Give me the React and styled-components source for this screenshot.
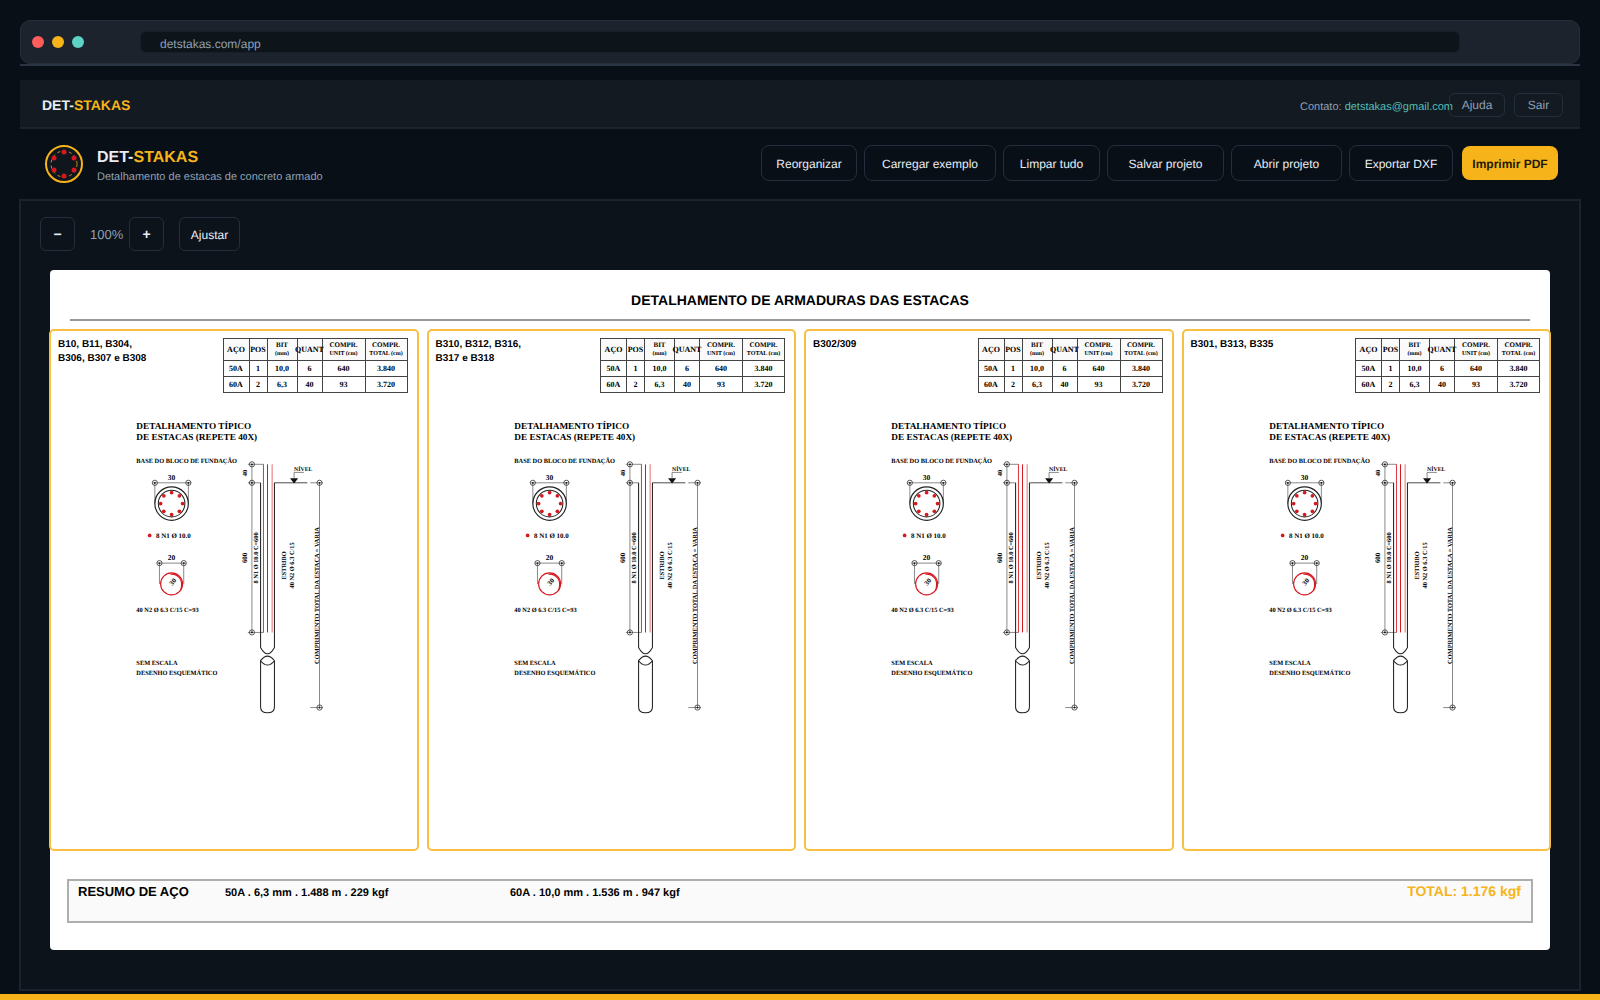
import React, { useState } from 'react'
import styled, { createGlobalStyle, ThemeProvider } from 'styled-components'

const theme = {
  sans: '"Liberation Sans", Arial, sans-serif',
  serif: '"Liberation Serif", "Times New Roman", serif',
  colors: {
    page: '#080f16',
    chrome: '#1c232d',
    field: '#0d151b',
    bar: '#131a22',
    panel: '#0c131a',
    line: '#1a232e',
    outline: '#242e3c',
    text: '#e8edf5',
    muted: '#8fa0b5',
    teal: '#55bfb3',
    yellow: '#f6b41a',
    yellowSoft: '#f8bf42',
    red: '#d6181f'
  }
}

const actions = [
  { text: 'Reorganizar', width: 96 },
  { text: 'Carregar exemplo', width: 132 },
  { text: 'Limpar tudo', width: 97 },
  { text: 'Salvar projeto', width: 117 },
  { text: 'Abrir projeto', width: 111 },
  { text: 'Exportar DXF', width: 104 }
]

const groups = [
  ['B10, B11, B304,', 'B306, B307 e B308'],
  ['B310, B312, B316,', 'B317 e B318'],
  ['B302/309'],
  ['B301, B313, B335']
]

const steel = [
  ['50A', '1', '10,0', '6', '640', '3.840'],
  ['60A', '2', '6,3', '40', '93', '3.720']
]

const bars = [0, 1, 2, 3, 4, 5, 6, 7].map(i => ({
  x: 72 + 19 * Math.cos((i * Math.PI) / 4),
  y: 162 + 19 * Math.sin((i * Math.PI) / 4)
}))

const nodes = [
  [43, 126],
  [101, 126],
  [51, 265],
  [93, 265],
  [211, 94],
  [211, 126],
  [211, 385],
  [328, 126],
  [328, 515]
]

function Logo() {
  return (
    <svg width="40" height="40" viewBox="0 0 40 40" aria-hidden="true">
      <circle cx="20" cy="20" r="18" fill="#10161d" stroke="#f6b41a" strokeWidth="2" />
      <circle
        cx="20"
        cy="20"
        r="13"
        fill="none"
        stroke="#f6b41a"
        strokeOpacity="0.8"
        strokeDasharray="3 3"
      />
      {[[20, 8], [30, 14], [30, 26], [20, 32], [10, 26], [10, 14]].map(([x, y]) => (
        <circle key={`${x}-${y}`} cx={x} cy={y} r="2.5" fill="#d6181f" />
      ))}
    </svg>
  )
}

function PileDrawing() {
  return (
    <Drawing viewBox="0 0 360 540">
      <DrawText x="11" y="33" $size={16}>DETALHAMENTO TÍPICO</DrawText>
      <DrawText x="11" y="52" $size={16}>DE ESTACAS (REPETE 40X)</DrawText>
      <DrawText x="11" y="92">BASE DO BLOCO DE FUNDAÇÃO</DrawText>

      {/* dimension lines */}
      <g stroke="#333" strokeWidth="1" fill="none">
        <path d="M39 126H106M43 126V162M101 126V162" />
        <path d="M47 265H97M51 265V301M93 265V301" />
        <path d="M211 94V385M204 94H231M204 126H226M204 385H231" />
        <path d="M328 126V515M312 126H334M312 515H334" />
        <path d="M284 118V108H301" />
        {nodes.map(([x, y]) => (
          <circle key={`${x}-${y}`} cx={x} cy={y} r="4.5" strokeWidth="1.4" />
        ))}
      </g>
      {nodes.map(([x, y]) => (
        <circle key={`${x}-${y}`} cx={x} cy={y} r="1.6" fill="#111" />
      ))}

      {/* pile section */}
      <DrawText x="72" y="121" $size={13} textAnchor="middle">30</DrawText>
      <circle cx="72" cy="162" r="29" fill="none" stroke="#222" strokeWidth="2" />
      <circle cx="72" cy="162" r="23" fill="none" stroke="#222" strokeWidth="1.8" />
      {bars.map((bar, i) => (
        <circle key={i} cx={bar.x} cy={bar.y} r="3.2" fill="#d6181f" />
      ))}
      <circle cx="34" cy="217" r="3.2" fill="#d6181f" />
      <DrawText x="45" y="221" $size={12}>8 N1 Ø 10.0</DrawText>

      {/* stirrup */}
      <DrawText x="72" y="259" $size={13} textAnchor="middle">20</DrawText>
      <g fill="none" stroke="#d6181f" strokeWidth="2">
        <circle cx="72" cy="301" r="19" />
        <path d="M70 284C84 283 93 295 88 311" />
      </g>
      <DrawText transform="translate(77 300) rotate(-50)" $size={12} textAnchor="middle">30</DrawText>
      <DrawText x="11" y="350">40 N2 Ø 6.3 C/15 C=93</DrawText>
      <DrawText x="11" y="441">SEM ESCALA</DrawText>
      <DrawText x="11" y="458">DESENHO ESQUEMÁTICO</DrawText>

      {/* pile elevation */}
      <g fill="none" stroke="#222" strokeWidth="1.8">
        <path d="M226 126V411Q238 433 250 411V126" />
        <path d="M250 126H307" strokeWidth="1.4" />
        <path d="M226 434Q238 418 250 434Q238 449 226 434V514Q226 524 238 524Q250 524 250 514V434" />
      </g>
      <path d="M277 118H291L284 127Z" fill="#111" />
      <g stroke="#d6181f" strokeWidth="1.8">
        <path d="M231 94V385" strokeOpacity="0.85" />
        <path d="M238 94V385" />
        <path d="M246 94V385" strokeOpacity="0.6" />
      </g>
      <DrawText x="284" y="105" $size={10}>NÍVEL</DrawText>
      <DrawText transform="translate(202 109) rotate(-90)" textAnchor="middle">40</DrawText>
      <DrawText transform="translate(203 256) rotate(-90)" $size={12} textAnchor="middle">600</DrawText>
      <DrawText transform="translate(222 256) rotate(-90)" textAnchor="middle">8 N1 Ø 10.0 C=600</DrawText>
      <DrawText transform="translate(270 269) rotate(-90)" textAnchor="middle">ESTRIBO</DrawText>
      <DrawText transform="translate(284 269) rotate(-90)" textAnchor="middle">40 N2 Ø 6.3 C/15</DrawText>
      <DrawText transform="translate(327 321) rotate(-90)" textAnchor="middle">
        COMPRIMENTO TOTAL DA ESTACA = VARIA
      </DrawText>
    </Drawing>
  )
}

function SteelTable() {
  return (
    <Table>
      <colgroup>
        <Col $width={26} />
        <Col $width={18} />
        <Col $width={30} />
        <Col $width={25} />
        <Col $width={43} />
        <Col $width={42} />
      </colgroup>
      <thead>
        <tr>
          <Th>AÇO</Th>
          <Th>POS</Th>
          <Th $small>BIT<Unit>(mm)</Unit></Th>
          <Th><Wide>QUANT</Wide></Th>
          <Th $small>COMPR.<Unit>UNIT (cm)</Unit></Th>
          <Th $small>COMPR.<Unit>TOTAL (cm)</Unit></Th>
        </tr>
      </thead>
      <tbody>
        {steel.map(row => (
          <tr key={row[0]}>
            {row.map((value, i) => (
              <Td key={i}>{value}</Td>
            ))}
          </tr>
        ))}
      </tbody>
    </Table>
  )
}

function App() {
  const [zoom, setZoom] = useState(100)
  return (
    <ThemeProvider theme={theme}>
      <GlobalStyle />
      <Page>
        <Browser>
          <Dots>
            <Dot $color="#ff5c5c" />
            <Dot $color="#f6b41a" />
            <Dot $color="#5dd3c8" />
          </Dots>
          <Address type="text" aria-label="Endereço" defaultValue="detstakas.com/app" />
        </Browser>
        <TopBar>
          <Brand>DET-<span>STAKAS</span></Brand>
          <TopNav>
            <Contact>
              Contato: <a href="mailto:detstakas@gmail.com">detstakas@gmail.com</a>
            </Contact>
            <SmallButton $width={56}>Ajuda</SmallButton>
            <SmallButton $width={49}>Sair</SmallButton>
          </TopNav>
        </TopBar>
        <Header>
          <Logo />
          <Heading>
            <Title>DET-<span>STAKAS</span></Title>
            <Subtitle>Detalhamento de estacas de concreto armado</Subtitle>
          </Heading>
          <Actions>
            {actions.map(({ text, width }) => (
              <ActionButton key={text} $width={width}>{text}</ActionButton>
            ))}
            <PrintButton $width={96}>Imprimir PDF</PrintButton>
          </Actions>
        </Header>
        <Panel>
          <Tools>
            <ToolButton $width={35} $bold aria-label="Diminuir" onClick={() => setZoom(zoom - 10)}>−</ToolButton>
            <Zoom>{zoom}%</Zoom>
            <ToolButton $width={35} $bold aria-label="Aumentar" onClick={() => setZoom(zoom + 10)}>+</ToolButton>
            <FitButton $width={61} onClick={() => setZoom(100)}>Ajustar</FitButton>
          </Tools>
          <Sheet>
            <SheetTitle>DETALHAMENTO DE ARMADURAS DAS ESTACAS</SheetTitle>
            <Cards>
              {groups.map(lines => (
                <Card key={lines[0]}>
                  <CardTop>
                    <Label>
                      {lines.map(line => (
                        <div key={line}>{line}</div>
                      ))}
                    </Label>
                    <SteelTable />
                  </CardTop>
                  <PileDrawing />
                </Card>
              ))}
            </Cards>
            <Summary>
              <SummaryTitle>RESUMO DE AÇO</SummaryTitle>
              <SummaryItem>50A . 6,3 mm . 1.488 m . 229 kgf</SummaryItem>
              <SummaryItem>60A . 10,0 mm . 1.536 m . 947 kgf</SummaryItem>
              <Total>TOTAL: 1.176 kgf</Total>
            </Summary>
          </Sheet>
        </Panel>
      </Page>
    </ThemeProvider>
  )
}

export default App

const GlobalStyle = createGlobalStyle`
  * {
    box-sizing: border-box;
  }
  body {
    margin: 0;
    background: ${({ theme }) => theme.colors.page};
    color: ${({ theme }) => theme.colors.text};
    font-family: ${({ theme }) => theme.sans};
    text-rendering: geometricPrecision;
  }
  button, input {
    font-family: inherit;
    text-rendering: inherit;
  }
`

const Page = styled.div`
  display: flex;
  flex-direction: column;
  min-height: 100vh;
  padding: 20px 20px 3px;
  border-bottom: 6px solid ${({ theme }) => theme.colors.yellow};
`

const Browser = styled.div`
  display: flex;
  align-items: center;
  gap: 56px;
  height: 44px;
  padding: 0 119px 0 11px;
  background: ${({ theme }) => theme.colors.chrome};
  border: 1px solid ${({ theme }) => theme.colors.outline};
  border-radius: 10px;
`

const Dots = styled.div`
  display: flex;
  gap: 8px;
`

const Dot = styled.span`
  width: 12px;
  height: 12px;
  border-radius: 50%;
  background: ${({ $color }) => $color};
`

const Address = styled.input`
  flex: 1;
  height: 22px;
  padding: 3px 19px 0;
  border: 1px solid #16202a;
  border-radius: 6px;
  background: ${({ theme }) => theme.colors.field};
  color: ${({ theme }) => theme.colors.muted};
  font-size: 12px;
`

const TopBar = styled.div`
  display: flex;
  align-items: center;
  justify-content: space-between;
  height: 65px;
  padding: 16px 17px 0 22px;
  border-top: 2px solid #2a3442;
  border-bottom: 2px solid ${({ theme }) => theme.colors.line};
  background: linear-gradient(
    ${({ theme }) => theme.colors.page} 14px,
    ${({ theme }) => theme.colors.bar} 14px
  );
`

const Brand = styled.div`
  font-size: 14px;
  font-weight: bold;

  span {
    color: ${({ theme }) => theme.colors.yellow};
  }
`

const TopNav = styled.div`
  display: flex;
  align-items: center;
  gap: 9px;
`

const Contact = styled.div`
  margin-right: -13px;
  padding-top: 4px;
  font-size: 11px;
  color: ${({ theme }) => theme.colors.muted};

  a {
    color: ${({ theme }) => theme.colors.teal};
    text-decoration: none;
  }
`

const Button = styled.button.attrs({ type: 'button' })`
  flex: none;
  width: ${({ $width }) => $width}px;
  padding: 0;
  border: 1px solid ${({ theme }) => theme.colors.outline};
  background: transparent;
  color: ${({ theme }) => theme.colors.text};
  font-size: 12px;
  cursor: pointer;
`

const SmallButton = styled(Button)`
  height: 24px;
  border-radius: 6px;
  color: ${({ theme }) => theme.colors.muted};
`

const Header = styled.header`
  display: flex;
  align-items: center;
  height: 70px;
  padding: 0 22px 0 24px;
`

const Heading = styled.div`
  flex: 1;
  margin-left: 13px;
  padding-top: 5px;
`

const Title = styled.h1`
  margin: 0;
  font-size: 16px;
  line-height: 20px;

  span {
    color: ${({ theme }) => theme.colors.yellow};
  }
`

const Subtitle = styled.p`
  margin: 0;
  font-size: 11px;
  line-height: 18px;
  color: ${({ theme }) => theme.colors.muted};
`

const Actions = styled.div`
  display: flex;
  align-items: center;
  gap: 7px;
  margin-bottom: 2px;
`

const ActionButton = styled(Button)`
  height: 36px;
  padding-top: 1px;
  border-radius: 8px;
`

const PrintButton = styled(Button)`
  height: 34px;
  margin-left: 2px;
  padding-top: 1px;
  border: 0;
  border-radius: 8px;
  background: ${({ theme }) => theme.colors.yellow};
  color: #231a05;
  font-weight: bold;
`

const Panel = styled.main`
  flex: 1;
  display: flex;
  flex-direction: column;
  margin: 0 -1px;
  padding: 16px 29px 39px;
  border: 2px solid ${({ theme }) => theme.colors.line};
  background: ${({ theme }) => theme.colors.panel};
`

const Tools = styled.div`
  display: flex;
  align-items: center;
  margin: 0 -10px 19px;
`

const ToolButton = styled(Button)`
  height: 34px;
  border-radius: 6px;
  font-size: ${({ $bold }) => ($bold ? 14 : 12)}px;
  font-weight: ${({ $bold }) => ($bold ? 'bold' : 'normal')};
`

const FitButton = styled(ToolButton)`
  margin-left: 15px;
  padding-top: 1px;
`

const Zoom = styled.output`
  width: 54px;
  padding-left: 15px;
  font-size: 13px;
  color: ${({ theme }) => theme.colors.muted};
`

const Sheet = styled.section`
  flex: 1;
  display: flex;
  flex-direction: column;
  padding-bottom: 27px;
  border-radius: 4px;
  background: #fff;
  color: #000;
`

const SheetTitle = styled.h2`
  margin: 0 20px 8px;
  padding: 22px 0 11px;
  border-bottom: 2px solid #999;
  font-size: 14px;
  line-height: 16px;
  text-align: center;
`

const Cards = styled.div`
  flex: 1;
  display: grid;
  grid-template-columns: repeat(4, 1fr);
  gap: 8px;
  margin: 0 -1px;
`

const Card = styled.article`
  padding: 7px 9px 7px 7px;
  border: 2px solid ${({ theme }) => theme.colors.yellowSoft};
  border-radius: 5px;
`

const CardTop = styled.div`
  display: flex;
  align-items: flex-start;
  justify-content: space-between;
`

const Label = styled.div`
  font-size: 10px;
  font-weight: bold;
  line-height: 14px;
`

const Table = styled.table`
  width: 185px;
  table-layout: fixed;
  border-collapse: collapse;
  font-family: ${({ theme }) => theme.serif};
  font-size: 8px;
  line-height: 10px;
`

const Col = styled.col`
  width: ${({ $width }) => $width}px;
`

const Td = styled.td`
  height: 16px;
  padding: 0;
  border: 1px solid #444;
  font-weight: bold;
  text-align: center;
`

const Th = styled.th`
  height: 22px;
  padding: 0;
  border: 1px solid #444;
  background: #fafafa;
  font-size: ${({ $small }) => ($small ? 7 : 8)}px;
  white-space: nowrap;
`

const Wide = styled.div`
  margin: 0 -4px;
`

const Unit = styled.div`
  font-size: 6px;
  line-height: 9px;
`

const Drawing = styled.svg`
  display: block;
  width: 208px;
  height: 312px;
  margin: 17px 0 0 72px;
`

const DrawText = styled.text`
  fill: #000;
  font-family: ${({ theme }) => theme.serif};
  font-size: ${({ $size = 11 }) => $size}px;
  font-weight: bold;
`

const Summary = styled.footer`
  display: grid;
  grid-template-columns: 147px 285px 1fr auto;
  align-items: baseline;
  height: 44px;
  margin: 28px 17px 0;
  padding: 1px 10px 0 9px;
  border: 2px solid #aeaeae;
  background: #fafafa;
`

const SummaryTitle = styled.strong`
  font-size: 13px;
`

const SummaryItem = styled.span`
  font-size: 11px;
  font-weight: bold;
`

const Total = styled.strong`
  font-size: 14px;
  line-height: 18px;
  color: ${({ theme }) => theme.colors.yellow};
`
